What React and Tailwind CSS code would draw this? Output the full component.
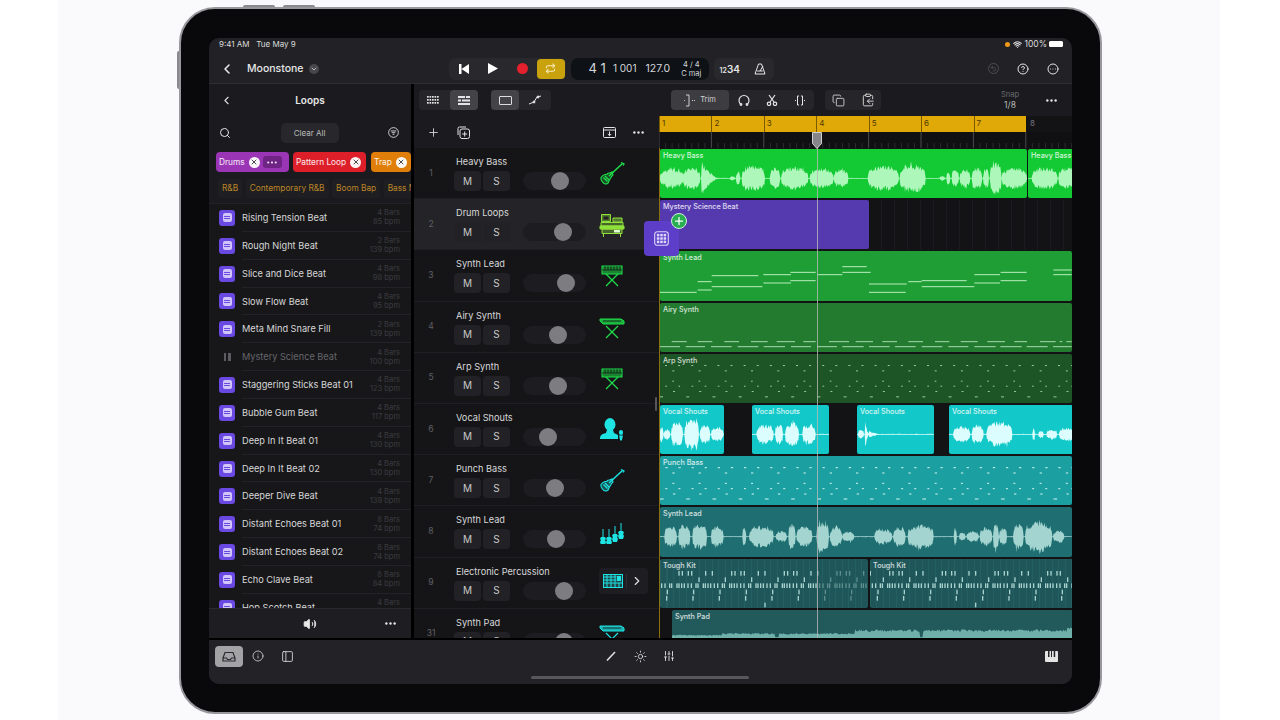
import { ChevronLeft, ChevronRight, ChevronDown, Search, Plus, CircleHelp, CircleEllipsis, Info, PanelLeft, SlidersVertical, Undo2, Copy, ClipboardCopy, Volume2, X, Wifi, Sun, Repeat } from 'lucide-react'

const Z = 3

function rng(seed) {
  let s = seed
  return () => {
    s = (s * 16807) % 2147483647
    return s / 2147483647
  }
}

// segments are [x0, x1, amp, decay?] in 3x reference units
function wavePath(segs, cy, seed, x0, x1) {
  const r = rng(seed)
  const top = []
  const bot = []
  for (let x = x0; x <= x1; x += 2) {
    let a = 1.5
    for (const s of segs) {
      if (x >= s[0] && x <= s[1]) {
        const t = (x - s[0]) / (s[1] - s[0] || 1)
        a = s[3] ? s[2] * Math.pow(1 - t, 1.6) + 1.5 : s[2] * Math.pow(Math.sin(Math.PI * t), 0.28)
        a = Math.max(a, 1.5)
      }
    }
    const spike = r() > 0.86 ? 1.18 : 1
    top.push(`${x},${(cy - a * spike * (0.58 + 0.42 * r())).toFixed(1)}`)
    bot.push(`${x},${(cy + a * spike * (0.58 + 0.42 * r())).toFixed(1)}`)
  }
  return 'M' + top.join('L') + 'L' + bot.reverse().join('L') + 'Z'
}

function padPath() {
  const r = rng(77)
  const pts = []
  for (let x = 40; x <= 1252; x += 3) {
    let a = 10
    if (x > 200) a = 15
    if (x > 360 && x < 372) a = 3
    if (x > 600) a = 26
    if (x > 795 && x < 803) a = 3
    if (x > 1235) a = 34
    pts.push(`${x},${(714 - a * (0.7 + 0.3 * r())).toFixed(1)}`)
  }
  return 'M40,714L' + pts.join('L') + 'L1252,714Z'
}

const heavySegs = [
  [15, 85, 30], [85, 135, 36], [140, 190, 52, true], [225, 240, 7], [243, 256, 22], [260, 330, 40],
  [345, 375, 34], [378, 460, 35], [465, 535, 33], [537, 580, 27], [638, 732, 40], [735, 812, 44],
  [855, 870, 8], [875, 886, 22], [890, 912, 28], [915, 945, 30], [950, 982, 34], [985, 1002, 32],
  [1005, 1040, 52], [1040, 1115, 33], [1130, 1207, 34], [1210, 1270, 34],
]
const vocalSegs = [
  [14, 26, 26], [26, 46, 16], [48, 84, 40], [88, 132, 50], [135, 166, 32], [168, 205, 22],
  [305, 356, 30], [360, 383, 32], [390, 432, 38], [442, 482, 32],
  [610, 626, 16], [630, 642, 48, true], [642, 675, 10, true],
  [895, 946, 26], [950, 986, 30], [995, 1072, 40], [1133, 1140, 22], [1150, 1166, 12], [1175, 1206, 16], [1212, 1270, 20],
]
const leadSegs = [
  [28, 66, 34], [70, 106, 38], [112, 156, 40], [168, 206, 32], [263, 274, 32], [283, 356, 34], [362, 396, 17],
  [400, 421, 40], [425, 472, 32], [485, 522, 50], [525, 561, 32], [563, 597, 17], [658, 711, 24], [715, 752, 30],
  [758, 836, 38], [897, 905, 32], [912, 931, 13], [935, 971, 17], [975, 1011, 30], [1015, 1031, 44], [1033, 1056, 27],
  [1075, 1106, 42], [1110, 1192, 48], [1195, 1227, 20],
]

const leadNotes = [
  [14, 125, 442], [128, 170, 435], [128, 170, 410], [170, 310, 392], [170, 322, 425], [325, 408, 389], [325, 408, 414],
  [406, 482, 382], [406, 482, 407], [488, 562, 389], [562, 635, 365], [562, 647, 382], [642, 755, 417], [642, 752, 442],
  [760, 800, 410], [800, 935, 407], [800, 958, 425], [958, 1035, 389], [958, 1035, 414], [1037, 1115, 382], [1037, 1115, 407],
  [1195, 1250, 375], [1195, 1250, 389],
]
const airyA = [[50, 95], [128, 172], [208, 252], [288, 338], [365, 420], [445, 482], [522, 582], [602, 654], [682, 726], [760, 804], [840, 883], [917, 968], [997, 1050], [1078, 1116], [1155, 1202], [1214, 1222], [1234, 1250]]
const airyB = [[14, 75], [92, 150], [168, 230], [248, 310], [326, 390], [408, 468], [486, 546], [562, 626], [642, 704], [720, 782], [800, 862], [880, 940], [958, 1022], [1036, 1100], [1115, 1178], [1194, 1250]]

function dots(rows, x1 = 1250) {
  const out = []
  for (const [y, start, period, w] of rows) {
    for (let x = start; x < x1; x += period) out.push([x, y, w])
  }
  return out
}
const arpDots = dots([[661, 30, 39.3, 6], [677, 52, 78.7, 6], [708, 52, 78.7, 5], [723, 31, 39.3, 5], [739, 54, 78.7, 6], [755, 15, 78.7, 9]])
const punchDots = dots([[203, 31, 39.3, 7], [219, 52, 78.7, 7], [250, 52, 78.7, 6], [266, 31, 39.3, 6], [282, 54, 78.7, 7], [297, 15, 78.7, 11]])

const kitRows = [
  [510, [56, 66, 84, 94, 136, 156], 158],
  [529, [116], 79],
  [547, [4, 14, 28, 34, 50, 56, 64, 72], 79],
  [566, [21], 79],
  [585, [19], 79],
]
const kitBars = []
for (const [y, xs, period] of kitRows) {
  for (let k = 0; k < 16; k++) for (const x of xs) {
    const bx = 14 + x + k * period
    if (bx < 1250) kitBars.push([bx, y])
  }
}
kitBars.push([328, 605], [960, 605])

// SVG filling a clip; its coordinates are the 3x reference coordinates with origin (655, oy)
function Draw({ left, top, w, h, oy = 145, children }) {
  return (
    <svg className="absolute inset-0" width={w} height={h} viewBox={`${(left - 655) * Z} ${(top - oy) * Z} ${w * Z} ${h * Z}`} preserveAspectRatio="none">
      {children}
    </svg>
  )
}

function Region({ label, className, children }) {
  return (
    <div className={`relative h-full shrink-0 overflow-hidden rounded-[2px] ${className}`}>
      {children}
      <span className="absolute left-[3px] top-[1px] text-[7.2px] leading-[11px] text-white/80 font-medium whitespace-nowrap">{label}</span>
    </div>
  )
}

function Row({ className = '', children }) {
  return <div className={`flex h-[51.2px] shrink-0 py-[1px] ${className}`}>{children}</div>
}

function KeyboardIcon({ c, wide }) {
  return (
    <svg width="26" height="24" viewBox="0 0 26 24" fill="none" stroke={c} strokeWidth="1">
      {wide ? (
        <>
          <path d="M1 3h21l3 2v3H4L1 5z" fill={c} fillOpacity=".75" />
          <path d="M4 5h18" stroke="#111" strokeWidth=".8" />
        </>
      ) : (
        <>
          <rect x="3" y="2" width="20" height="8" fill={c} fillOpacity=".55" />
          <path d="M3 6h20M6 2v4M9 2v4M12 2v4M15 2v4M18 2v4M21 2v4" stroke="#111" strokeWidth=".7" />
        </>
      )}
      <path d="M7 22 19 10M19 22 7 10" strokeWidth="1.2" />
    </svg>
  )
}

function BassIcon({ c }) {
  return (
    <svg width="26" height="24" viewBox="0 0 26 24" fill="none" stroke={c} strokeWidth="1.1">
      <path d="M10 14 23.500 1.500" strokeWidth="1.500" />
      <path d="M22 .5l3 1.500-1 1.500" strokeWidth="1.300" />
      <path d="M13 10c-1.500 1.500-3.500.5-4.500 1.500-.5 1.500-1 .8-2.500 1-1.500.5-3 1.500-4 3-.8 2 .5 3 1.500 4.500s3 2.500 5 1.500c1.500-1 1-2.500 2-3.500l1.500-2.500c.5-1.500 1.500-1.500 2-2.500z" fill={c} fillOpacity=".3" />
      <path d="M4.500 15.500 8.500 19.500M6 14l4 4" strokeWidth="1.300" />
    </svg>
  )
}

function DrumMachineIcon({ c }) {
  return (
    <svg width="26" height="24" viewBox="0 0 26 24" fill="none" stroke={c} strokeWidth="1">
      <path d="M1 13h24v3H1z" fill={c} />
      <path d="M2.500 1.500h9v7h-9zM14 5h9v4h-9z" fill={c} fillOpacity=".45" />
      <path d="M4.500 3.500h5v3h-5z" fill="#222" stroke="none" />
      <path d="M2 9.500h22V13H2z" fill={c} fillOpacity=".35" />
      <path d="M3 16h20v4.500H3z" fill={c} fillOpacity=".35" />
      <path d="M15 17h6v2.500h-6z" fill="#e0ffd6" stroke="none" />
      <path d="M4.500 20v4M21.500 20v4" />
    </svg>
  )
}

function VocalIcon({ c }) {
  return (
    <svg width="26" height="24" viewBox="0 0 26 24" fill={c}>
      <ellipse cx="11" cy="6.500" rx="5.500" ry="6.500" />
      <path d="M8 12h6l1 3 4 2v4H1c0-3 1-5 6-6z" />
      <rect x="20" y="12" width="4" height="5" rx="2" />
      <path d="M20 17.500h4l-1.200 5h-1.600z" />
    </svg>
  )
}

function OrchestraIcon({ c }) {
  const one = (x, t) => (
    <g key={x}>
      <path d={`M${x} ${t}v8`} stroke={c} strokeWidth="1" />
      <path d={`M${x - 2} ${t + 8}h4l1 2-1 1 1 2-1 3h-4l-1-3 1-2-1-1z`} fill={c} />
    </g>
  )
  return (
    <svg width="26" height="24" viewBox="0 0 26 24">
      {one(4, 9)}{one(10, 9)}{one(16, 6)}{one(22, 3)}
    </svg>
  )
}

function PadIcon({ c }) {
  return (
    <svg width="20" height="14" viewBox="0 0 20 14" fill="none" stroke={c} strokeWidth="1">
      <rect x=".5" y=".5" width="19" height="13" fill={c} fillOpacity=".2" />
      <path d="M4 .5v8M8 .5v8M12 .5v8M.5 3h13M.5 6h13M.5 9h19M4 9v4.500M8 9v4.500M12 9v4.500M16 9v4.500" />
      <path d="M14 2h4v5h-4z" fill={c} stroke="none" />
    </svg>
  )
}

function GridIcon({ className }) {
  return (
    <svg className={className} viewBox="0 0 20 20" fill="none" stroke="currentColor" strokeWidth="1.300">
      <rect x="2" y="2" width="16" height="16" rx="3" />
      <g fill="currentColor" stroke="none">
        <rect x="4.500" y="4.500" width="3" height="3" /><rect x="8.500" y="4.500" width="3" height="3" /><rect x="12.500" y="4.500" width="3" height="3" />
        <rect x="4.500" y="8.500" width="3" height="3" /><rect x="8.500" y="8.500" width="3" height="3" /><rect x="12.500" y="8.500" width="3" height="3" />
        <rect x="4.500" y="12.500" width="3" height="3" /><rect x="8.500" y="12.500" width="3" height="3" /><rect x="12.500" y="12.500" width="3" height="3" />
      </g>
    </svg>
  )
}

function Dots({ className = 'w-[12px] h-[3px]' }) {
  return (
    <svg className={className} viewBox="0 0 12 3" fill="currentColor">
      <circle cx="1.500" cy="1.500" r="1.300" /><circle cx="6" cy="1.500" r="1.300" /><circle cx="10.500" cy="1.500" r="1.300" />
    </svg>
  )
}

const loops = [
  ['Rising Tension Beat', '4 Bars', '85 bpm'],
  ['Rough Night Beat', '2 Bars', '139 bpm'],
  ['Slice and Dice Beat', '4 Bars', '98 bpm'],
  ['Slow Flow Beat', '4 Bars', '95 bpm'],
  ['Meta Mind Snare Fill', '2 Bars', '139 bpm'],
  ['Mystery Science Beat', '4 Bars', '100 bpm', true],
  ['Staggering Sticks Beat 01', '4 Bars', '123 bpm'],
  ['Bubble Gum Beat', '4 Bars', '117 bpm'],
  ['Deep In It Beat 01', '4 Bars', '130 bpm'],
  ['Deep In It Beat 02', '4 Bars', '130 bpm'],
  ['Deeper Dive Beat', '4 Bars', '139 bpm'],
  ['Distant Echoes Beat 01', '8 Bars', '74 bpm'],
  ['Distant Echoes Beat 02', '8 Bars', '74 bpm'],
  ['Echo Clave Beat', '8 Bars', '84 bpm'],
  ['Hop Scotch Beat', '4 Bars', '98 bpm'],
]

const GREEN = '#1fe04a'
const CYAN = '#1ee3e3'

const tracks = [
  { n: 1, name: 'Heavy Bass', pan: 'ml-[28px]', icon: <BassIcon c={GREEN} /> },
  { n: 2, name: 'Drum Loops', pan: 'ml-[31px]', icon: <DrumMachineIcon c="#8fe03a" />, on: true },
  { n: 3, name: 'Synth Lead', pan: 'ml-[34px]', icon: <KeyboardIcon c={GREEN} /> },
  { n: 4, name: 'Airy Synth', pan: 'ml-[26px]', icon: <KeyboardIcon c={GREEN} wide /> },
  { n: 5, name: 'Arp Synth', pan: 'ml-[26px]', icon: <KeyboardIcon c={GREEN} /> },
  { n: 6, name: 'Vocal Shouts', pan: 'ml-[16px]', icon: <VocalIcon c={CYAN} /> },
  { n: 7, name: 'Punch Bass', pan: 'ml-[23px]', icon: <BassIcon c={CYAN} /> },
  { n: 8, name: 'Synth Lead', pan: 'ml-[24px]', icon: <OrchestraIcon c={CYAN} /> },
  { n: 9, name: 'Electronic Percussion', pan: 'ml-[32px]', pad: true },
  { n: 31, name: 'Synth Pad', pan: 'ml-[32px]', icon: <KeyboardIcon c={CYAN} wide /> },
]

function Chip({ label, className, children }) {
  return (
    <div className={`flex h-[20px] shrink-0 items-center rounded-[4px] pl-[3px] pr-[3px] text-[8.3px] text-white/90 ${className}`}>
      <span className="mr-[4px] whitespace-nowrap">{label}</span>
      <span className="flex h-[11px] w-[11px] shrink-0 items-center justify-center rounded-full bg-white/95">
        <X className="h-[8px] w-[8px] text-black/70" strokeWidth={3} />
      </span>
      {children}
    </div>
  )
}

function LoopsPanel() {
  return (
    <div className="flex w-[202px] shrink-0 flex-col bg-[#17171a]">
      <div className="flex h-[32px] shrink-0 items-center justify-center relative bg-[#1b1b1f]">
        <ChevronLeft className="absolute left-[11px] h-[13px] w-[13px] text-[#ddd]" strokeWidth={2} />
        <span className="text-[10px] font-semibold text-[#e8e8e8]">Loops</span>
      </div>
      <div className="flex h-[33px] shrink-0 items-center justify-between bg-[#1b1b1f] pl-[10px] pr-[12px]">
        <Search className="h-[12px] w-[12px] text-[#e4e4e4]" strokeWidth={2} />
        <div className="flex h-[20px] w-[58px] items-center justify-center rounded-[5px] bg-[#28282c] text-[8px] text-[#bdbdbd]">Clear All</div>
        <svg className="h-[11px] w-[11px] text-[#ddd]" viewBox="0 0 12 12" fill="none" stroke="currentColor">
          <circle cx="6" cy="6" r="5.300" /><path d="M3 4.300h6M4 6.200h4M5 8h2" />
        </svg>
      </div>
      <div className="flex h-[27px] shrink-0 items-start gap-[4px] overflow-hidden bg-[#1b1b1f] pl-[7px] pt-[3px]">
        <Chip label="Drums" className="w-[73px] bg-[#9a35b5]">
          <span className="ml-[3px] flex h-[12px] w-[19px] items-center justify-center rounded-[3px] bg-[#6f2385]">
            <Dots className="h-[3px] w-[10px]" />
          </span>
        </Chip>
        <Chip label="Pattern Loop" className="w-[73px] bg-[#dd1f2a]" />
        <Chip label="Trap" className="ml-[1px] w-[40px] bg-[#df7f0a]" />
      </div>
      <div className="flex h-[28px] shrink-0 items-start gap-[3.500px] overflow-hidden border-b border-[#232327] bg-[#1b1b1f] pl-[9px] pt-[3px] text-[8.300px] text-[#bd8428]">
        <span className="flex h-[19px] shrink-0 items-center rounded-[3px] bg-[#1f1f22] px-[4px]">R&amp;B</span>
        <span className="flex h-[19px] shrink-0 items-center rounded-[3px] bg-[#1f1f22] px-[4px]">Contemporary R&amp;B</span>
        <span className="flex h-[19px] shrink-0 items-center rounded-[3px] bg-[#1f1f22] px-[4px]">Boom Bap</span>
        <span className="flex h-[19px] shrink-0 items-center rounded-[3px] bg-[#1f1f22] px-[4px] whitespace-nowrap">Bass Music</span>
      </div>
      <div className="h-[404px] shrink-0 overflow-hidden">
        {loops.map(([name, bars, bpm, playing]) => (
          <div key={name} className="flex h-[27.85px] items-center pl-[10px]">
            {playing ? (
              <div className="flex w-[16px] justify-center gap-[2px]">
                <span className="h-[8px] w-[2.500px] bg-[#5c5c60]" />
                <span className="h-[8px] w-[2.500px] bg-[#5c5c60]" />
              </div>
            ) : (
              <div className="flex h-[16px] w-[16px] items-center justify-center rounded-[3px] bg-[#6a48e2]">
                <div className="flex h-[9px] w-[9px] flex-col justify-center gap-[1px] rounded-[2px] bg-[#d0c5fb] px-[1.500px]">
                  <span className="h-[1px] bg-[#6a48e2]" />
                  <span className="h-[1px] bg-[#6a48e2]" />
                </div>
              </div>
            )}
            <div className="ml-[7px] flex h-full flex-1 items-center justify-between border-b border-[#232327] pr-[11px]">
              <span className={`pt-[1px] text-[9.200px] whitespace-nowrap ${playing ? 'text-[#66666a]' : 'text-[#d8d8d8]'}`}>{name}</span>
              <span className="text-right text-[7.500px] leading-[9px] text-[#3c3c40]">{bars}<br />{bpm}</span>
            </div>
          </div>
        ))}
      </div>
      <div className="flex h-[30px] shrink-0 items-center justify-center relative border-t border-[#2a2a2e] bg-[#1e1e22]">
        <Volume2 className="h-[14px] w-[14px] text-[#e8e8e8]" fill="currentColor" strokeWidth={1.500} />
        <Dots className="absolute right-[15px] h-[3px] w-[11px] text-[#e8e8e8]" />
      </div>
    </div>
  )
}

function TrackHeader({ t }) {
  return (
    <div className={`flex h-[51.2px] shrink-0 border-b border-[#1f1f23] ${t.on ? 'bg-[#242428]' : 'bg-[#151518]'}`}>
      <div className="flex w-[32px] shrink-0 items-center justify-center pl-[2px] text-[8.5px] text-[#606064]">{t.n}</div>
      <div className="flex flex-1 flex-col pl-[10px] pt-[7px]">
        <div className="h-[13px] text-[9.200px] leading-[13px] text-[#d8d8d8] whitespace-nowrap">{t.name}</div>
        <div className="-ml-[2px] mt-[3px] flex items-center">
          <div className="flex gap-[2px] text-[10px] text-[#c8c8c8]">
            <span className="flex h-[20px] w-[27px] items-center justify-center rounded-[4px] bg-[#222226]">M</span>
            <span className="flex h-[20px] w-[27px] items-center justify-center rounded-[4px] bg-[#222226]">S</span>
          </div>
          <div className="ml-[13px] flex h-[18px] w-[63px] items-center rounded-full bg-[#1d1d21]">
            <span className={`h-[18px] w-[18px] rounded-full bg-[#7d7d81] ${t.pan}`} />
          </div>
          {t.pad ? (
            <div className="ml-[13px] -mt-[20px] flex h-[26px] w-[49px] items-center rounded-[4px] bg-[#1e1e22]">
              <div className="flex w-[28px] justify-center border-r border-[#2e2e32]"><PadIcon c={CYAN} /></div>
              <ChevronRight className="ml-[3px] h-[14px] w-[14px] text-[#e0e0e0]" strokeWidth={2} />
            </div>
          ) : (
            <div className="ml-[13px] -mt-[14px] w-[26px]">{t.icon}</div>
          )}
        </div>
      </div>
    </div>
  )
}

function Timeline() {
  const bars = [1, 2, 3, 4, 5, 6, 7]
  return (
    <div className="relative flex flex-1 flex-col overflow-hidden bg-[#131316]">
      <div className="flex h-[16px] shrink-0">
        <div className="flex w-[367px] bg-[#e0a908] pt-0">
          {bars.map((b) => (
            <span key={b} className="flex-1 border-l border-[#7a5a00] pl-[2px] text-[8px] leading-[14px] text-[#4f3a00]">{b}</span>
          ))}
        </div>
        <span className="pl-[4px] text-[8px] leading-[14px] text-[#77777b]">8</span>
      </div>
      <svg className="h-[16px] w-full shrink-0 bg-[#101013]" viewBox="0 0 413 16">
        {Array.from({ length: 64 }, (_, i) => (
          <path key={i} d={`M${i * 6.55} ${i % 8 === 0 ? 0 : 11}V16`} stroke={i % 8 === 0 ? '#4a4a4e' : '#2c2c30'} />
        ))}
      </svg>

      <div className="flex h-[490px] flex-col overflow-hidden border-l border-[#8a7010]">
        <Row>
          <Region label="Heavy Bass" className="w-[367px] bg-[#13c934]">
            <Draw left={660} top={149} w={367} h={49}><path d={wavePath(heavySegs, 100, 11, 14, 1116)} fill="#aef7bb" /></Draw>
          </Region>
          <Region label="Heavy Bass" className="ml-[1px] w-[45px] bg-[#13c934]">
            <Draw left={1028} top={149} w={45} h={49}><path d={wavePath(heavySegs, 100, 12, 1118, 1252)} fill="#aef7bb" /></Draw>
          </Region>
        </Row>
        <Row className="bg-[repeating-linear-gradient(90deg,#1c1c20_0,#1c1c20_1px,transparent_1px,transparent_13px)]">
          <Region label="Mystery Science Beat" className="w-[209px] bg-[#553aaf]" />
        </Row>
        <Row>
          <Region label="Synth Lead" className="w-full bg-[#1f9e35]">
            <Draw left={660} top={251} w={413} h={49}>
              {leadNotes.map(([a, b, y], i) => <rect key={i} x={a} y={y - 1.500} width={b - a} height="3" fill="#b8eebc" />)}
            </Draw>
          </Region>
        </Row>
        <Row>
          <Region label="Airy Synth" className="w-full bg-[#237b30]">
            <Draw left={660} top={302} w={413} h={49}>
              {airyA.map(([a, b], i) => <rect key={i} x={a} y={585.500} width={b - a} height="3" fill="#a8d8ac" />)}
              {airyB.map(([a, b], i) => <rect key={i} x={a} y={600.500} width={b - a} height="3" fill="#a8d8ac" />)}
            </Draw>
          </Region>
        </Row>
        <Row>
          <Region label="Arp Synth" className="w-full bg-[#1d5526]">
            <Draw left={660} top={353.800} w={413} h={49}>
              {arpDots.map(([x, y, w], i) => <rect key={i} x={x} y={y - 1.500} width={w} height="3" fill="#9cc9a0" />)}
            </Draw>
          </Region>
        </Row>
        <Row>
          <Region label="Vocal Shouts" className="w-[64px] bg-[#12c8c8]">
            <Draw left={660} top={405} w={64} h={49} oy={400}><path d={wavePath(vocalSegs, 103, 21, 14, 208)} fill="#dcfdfd" /></Draw>
          </Region>
          <Region label="Vocal Shouts" className="ml-[28px] w-[77px] bg-[#12c8c8]">
            <Draw left={752} top={405} w={77} h={49} oy={400}><path d={wavePath(vocalSegs, 103, 22, 290, 522)} fill="#dcfdfd" /></Draw>
          </Region>
          <Region label="Vocal Shouts" className="ml-[28px] w-[77px] bg-[#12c8c8]">
            <Draw left={857} top={405} w={77} h={49} oy={400}><path d={wavePath(vocalSegs, 103, 23, 605, 838)} fill="#dcfdfd" /></Draw>
          </Region>
          <Region label="Vocal Shouts" className="ml-[15px] w-[124px] bg-[#12c8c8]">
            <Draw left={949} top={405} w={124} h={49} oy={400}><path d={wavePath(vocalSegs, 103, 24, 882, 1270)} fill="#dcfdfd" /></Draw>
          </Region>
        </Row>
        <Row>
          <Region label="Punch Bass" className="w-full bg-[#1c9fa1]">
            <Draw left={660} top={456} w={413} h={49} oy={400}>
              {punchDots.map(([x, y, w], i) => <rect key={i} x={x} y={y - 1.500} width={w} height="3" fill="#d4f3f3" />)}
            </Draw>
          </Region>
        </Row>
        <Row>
          <Region label="Synth Lead" className="w-full bg-[#1f6f72]">
            <Draw left={660} top={507} w={413} h={49} oy={400}><path d={wavePath(leadSegs, 410, 31, 14, 1250)} fill="#a3d4d0" /></Draw>
          </Region>
        </Row>
        <Row>
          <Region label="Tough Kit" className="w-[208px] bg-[#1e5659] bg-[repeating-linear-gradient(90deg,#245f62_0,#245f62_1px,transparent_1px,transparent_6.500px)]">
            <Draw left={660} top={558} w={208} h={49} oy={400}>
              {kitBars.map(([x, y], i) => <rect key={i} x={x} y={y} width="4" height="14" fill={x > 490 ? '#5e8e8e' : '#a9d2cf'} />)}
            </Draw>
          </Region>
          <Region label="Tough Kit" className="ml-[2px] w-[203px] bg-[#1e5659] bg-[repeating-linear-gradient(90deg,#245f62_0,#245f62_1px,transparent_1px,transparent_6.500px)]">
            <Draw left={870} top={558} w={203} h={49} oy={400}>
              {kitBars.map(([x, y], i) => <rect key={i} x={x} y={y} width="4" height="14" fill="#a9d2cf" />)}
            </Draw>
          </Region>
        </Row>
        <Row>
          <div className="w-[12px] shrink-0" />
          <Region label="Synth Pad" className="h-[50px] w-[401px] bg-[#225a5c]">
            <Draw left={672} top={610} w={401} h={50} oy={400}><path d={padPath()} fill="#6fb0aa" /></Draw>
          </Region>
        </Row>
      </div>

      {/* playhead */}
      <div className="absolute bottom-0 left-[157.500px] top-[16px] w-[1.500px] bg-[#b8b8b8]/80" />
      <svg className="absolute left-[153px] top-[16px] h-[17px] w-[10px]" viewBox="0 0 10 17">
        <path d="M.5 .5h9v11l-4.500 5-4.500-5z" fill="#85858a" stroke="#d0d0d0" />
      </svg>
    </div>
  )
}

function Screen() {
  return (
    <div className="flex h-[646px] w-[863px] flex-col overflow-hidden rounded-[10px] bg-[#222226] text-white">
      <div className="flex h-[16px] shrink-0 items-start justify-between pl-[10px] pr-[9px] pt-[1px] text-[8px] leading-[10px] text-[#dcdcdc]">
        <span>9:41 AM&nbsp;&nbsp;&nbsp;Tue May 9</span>
        <span className="flex items-center gap-[2px]">
          <span className="mr-[1px] h-[5px] w-[5px] rounded-full bg-[#f09a1a]" />
          <Wifi className="h-[9px] w-[9px]" strokeWidth={3} />
          <span className="text-[8.500px]">100%</span>
          <span className="h-[6px] w-[14px] rounded-[1.500px] bg-white" />
        </span>
      </div>

      <div className="flex h-[30px] shrink-0 items-center border-b border-[#2e2e32]">
        <ChevronLeft className="ml-[10px] h-[16px] w-[16px] text-[#eee]" strokeWidth={2.200} />
        <span className="ml-[12px] text-[10.500px] font-medium text-[#e6e6e6]">Moonstone</span>
        <span className="ml-[5px] flex h-[10px] w-[10px] items-center justify-center rounded-full bg-[#48484c]">
          <ChevronDown className="h-[8px] w-[8px] text-[#bbb]" strokeWidth={3} />
        </span>
        <div className="ml-[130px] flex h-[22px] w-[117px] items-center rounded-[6px] bg-[#29292d]">
          <svg className="ml-[10px] h-[10px] w-[10px] text-white" viewBox="0 0 10 10" fill="currentColor"><path d="M0 0h2.500v10H0zM10 0v10L2.500 5z" /></svg>
          <svg className="ml-[19px] h-[11px] w-[10px] text-white" viewBox="0 0 10 11" fill="currentColor"><path d="M0 0 10 5.500 0 11z" /></svg>
          <span className="ml-[19px] h-[11px] w-[11px] rounded-full bg-[#e3202c]" />
          <span className="ml-[9px] flex h-[20px] w-[28px] items-center justify-center rounded-[4px] bg-[#c9a20d]">
            <Repeat className="h-[11px] w-[11px] text-[#f7edc0]" strokeWidth={2.200} />
          </span>
        </div>
        <div className="ml-[5px] flex h-[22px] w-[138px] items-center rounded-[7px] bg-[#0e1116] text-[#d4d8dc]">
          <span className="ml-[18px] text-[13px] leading-none whitespace-nowrap">4 1</span>
          <span className="ml-[7px] text-[10px] whitespace-nowrap">1 001</span>
          <span className="ml-[9px] text-[10.500px]">127.0</span>
          <span className="ml-[11px] text-center text-[7.500px] leading-[9px]">4 / 4<br />C maj</span>
        </div>
        <div className="ml-[5px] flex h-[22px] w-[60px] items-center rounded-[6px] bg-[#29292d] pl-[6px] text-[#e6e6e6]">
          <span className="font-semibold text-[10px] leading-none"><span className="text-[7px]">12</span>34</span>
          <svg className="ml-[14px] h-[12px] w-[12px]" viewBox="0 0 12 12" fill="none" stroke="currentColor"><path d="M4.500 1h3L11 11H1zM3.200 8h5.600M6 8l3-5" /></svg>
        </div>
        <span className="ml-[214px] flex h-[11px] w-[11px] items-center justify-center rounded-full border border-[#4e4e52]">
          <Undo2 className="h-[7px] w-[7px] text-[#4e4e52]" strokeWidth={3} />
        </span>
        <CircleHelp className="ml-[18px] h-[12px] w-[12px] text-[#e4e4e4]" />
        <CircleEllipsis className="ml-[18px] h-[12px] w-[12px] text-[#e4e4e4]" />
      </div>

      <div className="flex h-[554px] shrink-0">
        <LoopsPanel />
        <div className="w-[3px] shrink-0 bg-black" />
        <div className="flex min-w-0 flex-1 flex-col bg-[#1b1b1f]">
          <div className="flex h-[32px] shrink-0 items-center text-[#e4e4e4]">
            <div className="ml-[5px] flex h-[20px] w-[59px] items-center rounded-[4px] bg-[#26262a]">
              <svg className="ml-[8px] h-[9px] w-[12px]" viewBox="0 0 12 9" fill="currentColor">
                {[0, 3, 6].map((y) => [0, 2.500, 5, 7.500, 10].map((x) => <rect key={`${x}${y}`} x={x} y={y} width="1.700" height="1.700" />))}
              </svg>
              <span className="ml-[11px] flex h-[20px] w-[28px] items-center justify-center rounded-[4px] bg-[#434348]">
                <svg className="h-[9px] w-[12px]" viewBox="0 0 12 9" fill="currentColor"><path d="M0 0h7v2H0zM8 0h4v2H8zM0 3.500h3v2H0zM4 3.500h8v2H4zM0 7h12v2H0z" /></svg>
              </span>
            </div>
            <div className="ml-[13px] flex h-[20px] w-[60px] items-center rounded-[4px] bg-[#26262a]">
              <span className="flex h-[20px] w-[28px] items-center justify-center rounded-[4px] bg-[#434348]">
                <span className="h-[9px] w-[13px] rounded-[1px] border border-[#ddd]" />
              </span>
              <svg className="ml-[9px] h-[10px] w-[14px]" viewBox="0 0 14 10" fill="none" stroke="currentColor"><path d="M1 9 6 7l3-5 4-1" /><circle cx="6" cy="7" r="1" fill="currentColor" /><circle cx="10" cy="2" r="1" fill="currentColor" /></svg>
            </div>
            <div className="ml-[120px] flex h-[20px] w-[143px] items-center rounded-[4px] bg-[#26262a]">
              <span className="flex h-[20px] w-[58px] items-center justify-center gap-[5px] rounded-[4px] bg-[#3c3c41] text-[7.500px] text-[#d0d0d0]">
                <svg className="h-[13px] w-[11px]" viewBox="0 0 11 13" fill="none" stroke="currentColor"><path d="M2 1h3v11H2M0 6.500h.8M8 6.500h1M10 6.500h1" /></svg>
                Trim
              </span>
              <svg className="ml-[9px] h-[12px] w-[12px]" viewBox="0 0 12 12" fill="none" stroke="currentColor" strokeWidth="1.200"><path d="M3 10.500A5 5 0 1 1 9 10.500" /><circle cx="3" cy="10.500" r=".8" fill="currentColor" /><circle cx="9" cy="10.500" r=".8" fill="currentColor" /></svg>
              <svg className="ml-[16px] h-[12px] w-[12px]" viewBox="0 0 12 12" fill="none" stroke="currentColor" strokeWidth="1.200"><path d="M3 1 8 8M9 1 4 8" /><circle cx="3" cy="9.800" r="1.700" /><circle cx="9" cy="9.800" r="1.700" /></svg>
              <svg className="ml-[16px] h-[11px] w-[12px]" viewBox="0 0 12 11" fill="none" stroke="currentColor"><path d="M5 1H3.500v9H5M7 1h1.500v9H7M1 5.500h1M10 5.500h1" /></svg>
            </div>
            <div className="ml-[11px] flex h-[20px] w-[56px] items-center rounded-[4px] bg-[#26262a]">
              <Copy className="ml-[7px] h-[13px] w-[13px]" strokeWidth={1.500} />
              <ClipboardCopy className="ml-[16px] h-[14px] w-[14px]" strokeWidth={1.500} />
            </div>
            <div className="ml-[116px] w-[26px] text-center leading-none">
              <div className="text-[7.500px] text-[#6c6c70]">Snap</div>
              <div className="mt-[2px] text-[8.500px] text-[#b8b8b8]">1/8</div>
            </div>
            <Dots className="ml-[23px] h-[3px] w-[11px]" />
          </div>

          <div className="relative flex h-[522px] shrink-0">
            <div className="flex w-[245px] shrink-0 flex-col overflow-hidden">
              <div className="flex h-[32px] shrink-0 items-center text-[#e4e4e4]">
                <Plus className="ml-[13px] h-[13px] w-[13px]" strokeWidth={1.500} />
                <svg className="ml-[17px] h-[13px] w-[13px]" viewBox="0 0 13 13" fill="none" stroke="currentColor"><rect x="3" y="3" width="9.500" height="9.500" rx="2" /><path d="M1 9V2.500A1.500 1.500 0 0 1 2.500 1H9M7.700 5.500v5M5.200 8h5" /></svg>
                <svg className="ml-[133px] h-[11px] w-[13px]" viewBox="0 0 13 11" fill="none" stroke="currentColor"><rect x=".5" y=".5" width="12" height="10" rx="1" /><path d="M.5 3h12M6.500 4.500v4M4.800 7l1.700 1.700L8.200 7" /></svg>
                <Dots className="ml-[17px] h-[3px] w-[11px]" />
              </div>
              {tracks.map((t) => <TrackHeader key={t.n} t={t} />)}
            </div>
            <Timeline />

            {/* dragged loop */}
            <div className="absolute left-[230px] top-[105px] flex h-[35px] w-[35px] items-center justify-center rounded-[4px] bg-[#5c3ec8]">
              <GridIcon className="h-[17px] w-[17px] text-[#dcd6fa]" />
            </div>
            <div className="absolute left-[257px] top-[97px] flex h-[16px] w-[16px] items-center justify-center rounded-full border border-[#d0f0d8] bg-[#2aae52]">
              <Plus className="h-[12px] w-[12px] text-white" strokeWidth={2.500} />
            </div>
            <div className="absolute left-[241px] top-[281px] h-[14px] w-[2px] rounded-full bg-[#55555a]" />
          </div>
        </div>
      </div>

      <div className="relative flex flex-1 items-start border-t-2 border-black bg-[#232327] pt-[6px] text-[#e4e4e4]">
        <span className="ml-[6px] flex h-[21px] w-[28px] items-center justify-center rounded-[4px] bg-[#a3a3a6]">
          <svg className="h-[11px] w-[14px] text-[#2a2a2e]" viewBox="0 0 14 11" fill="none" stroke="currentColor" strokeWidth="1.200"><path d="M1 7 3 1.500h8L13 7v3H1zM1 7h3.500l1 1.500h3L9.500 7H13" /></svg>
        </span>
        <Info className="ml-[9px] mt-[4px] h-[12px] w-[12px]" strokeWidth={1.500} />
        <PanelLeft className="ml-[17px] mt-[4px] h-[13px] w-[13px]" strokeWidth={1.500} />
        <svg className="ml-[312px] mt-[5px] h-[10px] w-[10px]" viewBox="0 0 10 10" fill="none" stroke="currentColor" strokeWidth="1.500"><path d="M1 9.500 9 1" /></svg>
        <Sun className="ml-[18px] mt-[4px] h-[13px] w-[13px]" strokeWidth={1.500} />
        <SlidersVertical className="ml-[16px] mt-[4px] h-[12px] w-[12px]" strokeWidth={1.800} />
        <svg className="ml-[370px] mt-[5px] h-[11px] w-[13px]" viewBox="0 0 13 11" fill="currentColor"><path d="M0 1a1 1 0 0 1 1-1h11a1 1 0 0 1 1 1v9a1 1 0 0 1-1 1H1a1 1 0 0 1-1-1z" /><path d="M3 0h1.500v6H3zM6 0h1v6H6zM8.700 0h1.500v6H8.700z" fill="#232327" /></svg>
        <div className="absolute bottom-[5px] left-[322px] h-[3px] w-[218px] rounded-full bg-[#58585c]" />
      </div>
    </div>
  )
}

export default function App() {
  return (
    <div className="h-[720px] w-[1280px] overflow-hidden bg-white [font-family:Inter,sans-serif]">
      <div className="ml-[58px] h-full w-[1162px] bg-[#fafafc] pl-[121px] pt-[7px]">
        <div className="relative h-[707px] w-[923px] rounded-[36px] border-2 border-[#98989c] bg-[#09090b] pl-[28px] pt-[29px]">
          <span className="absolute -top-[4px] left-[62px] h-[2px] w-[32px] rounded-t bg-[#8a8a8e]" />
          <span className="absolute -top-[4px] left-[102px] h-[2px] w-[32px] rounded-t bg-[#8a8a8e]" />
          <span className="absolute -left-[4px] top-[42px] h-[38px] w-[2px] rounded-l bg-[#8a8a8e]" />
          <Screen />
        </div>
      </div>
    </div>
  )
}
